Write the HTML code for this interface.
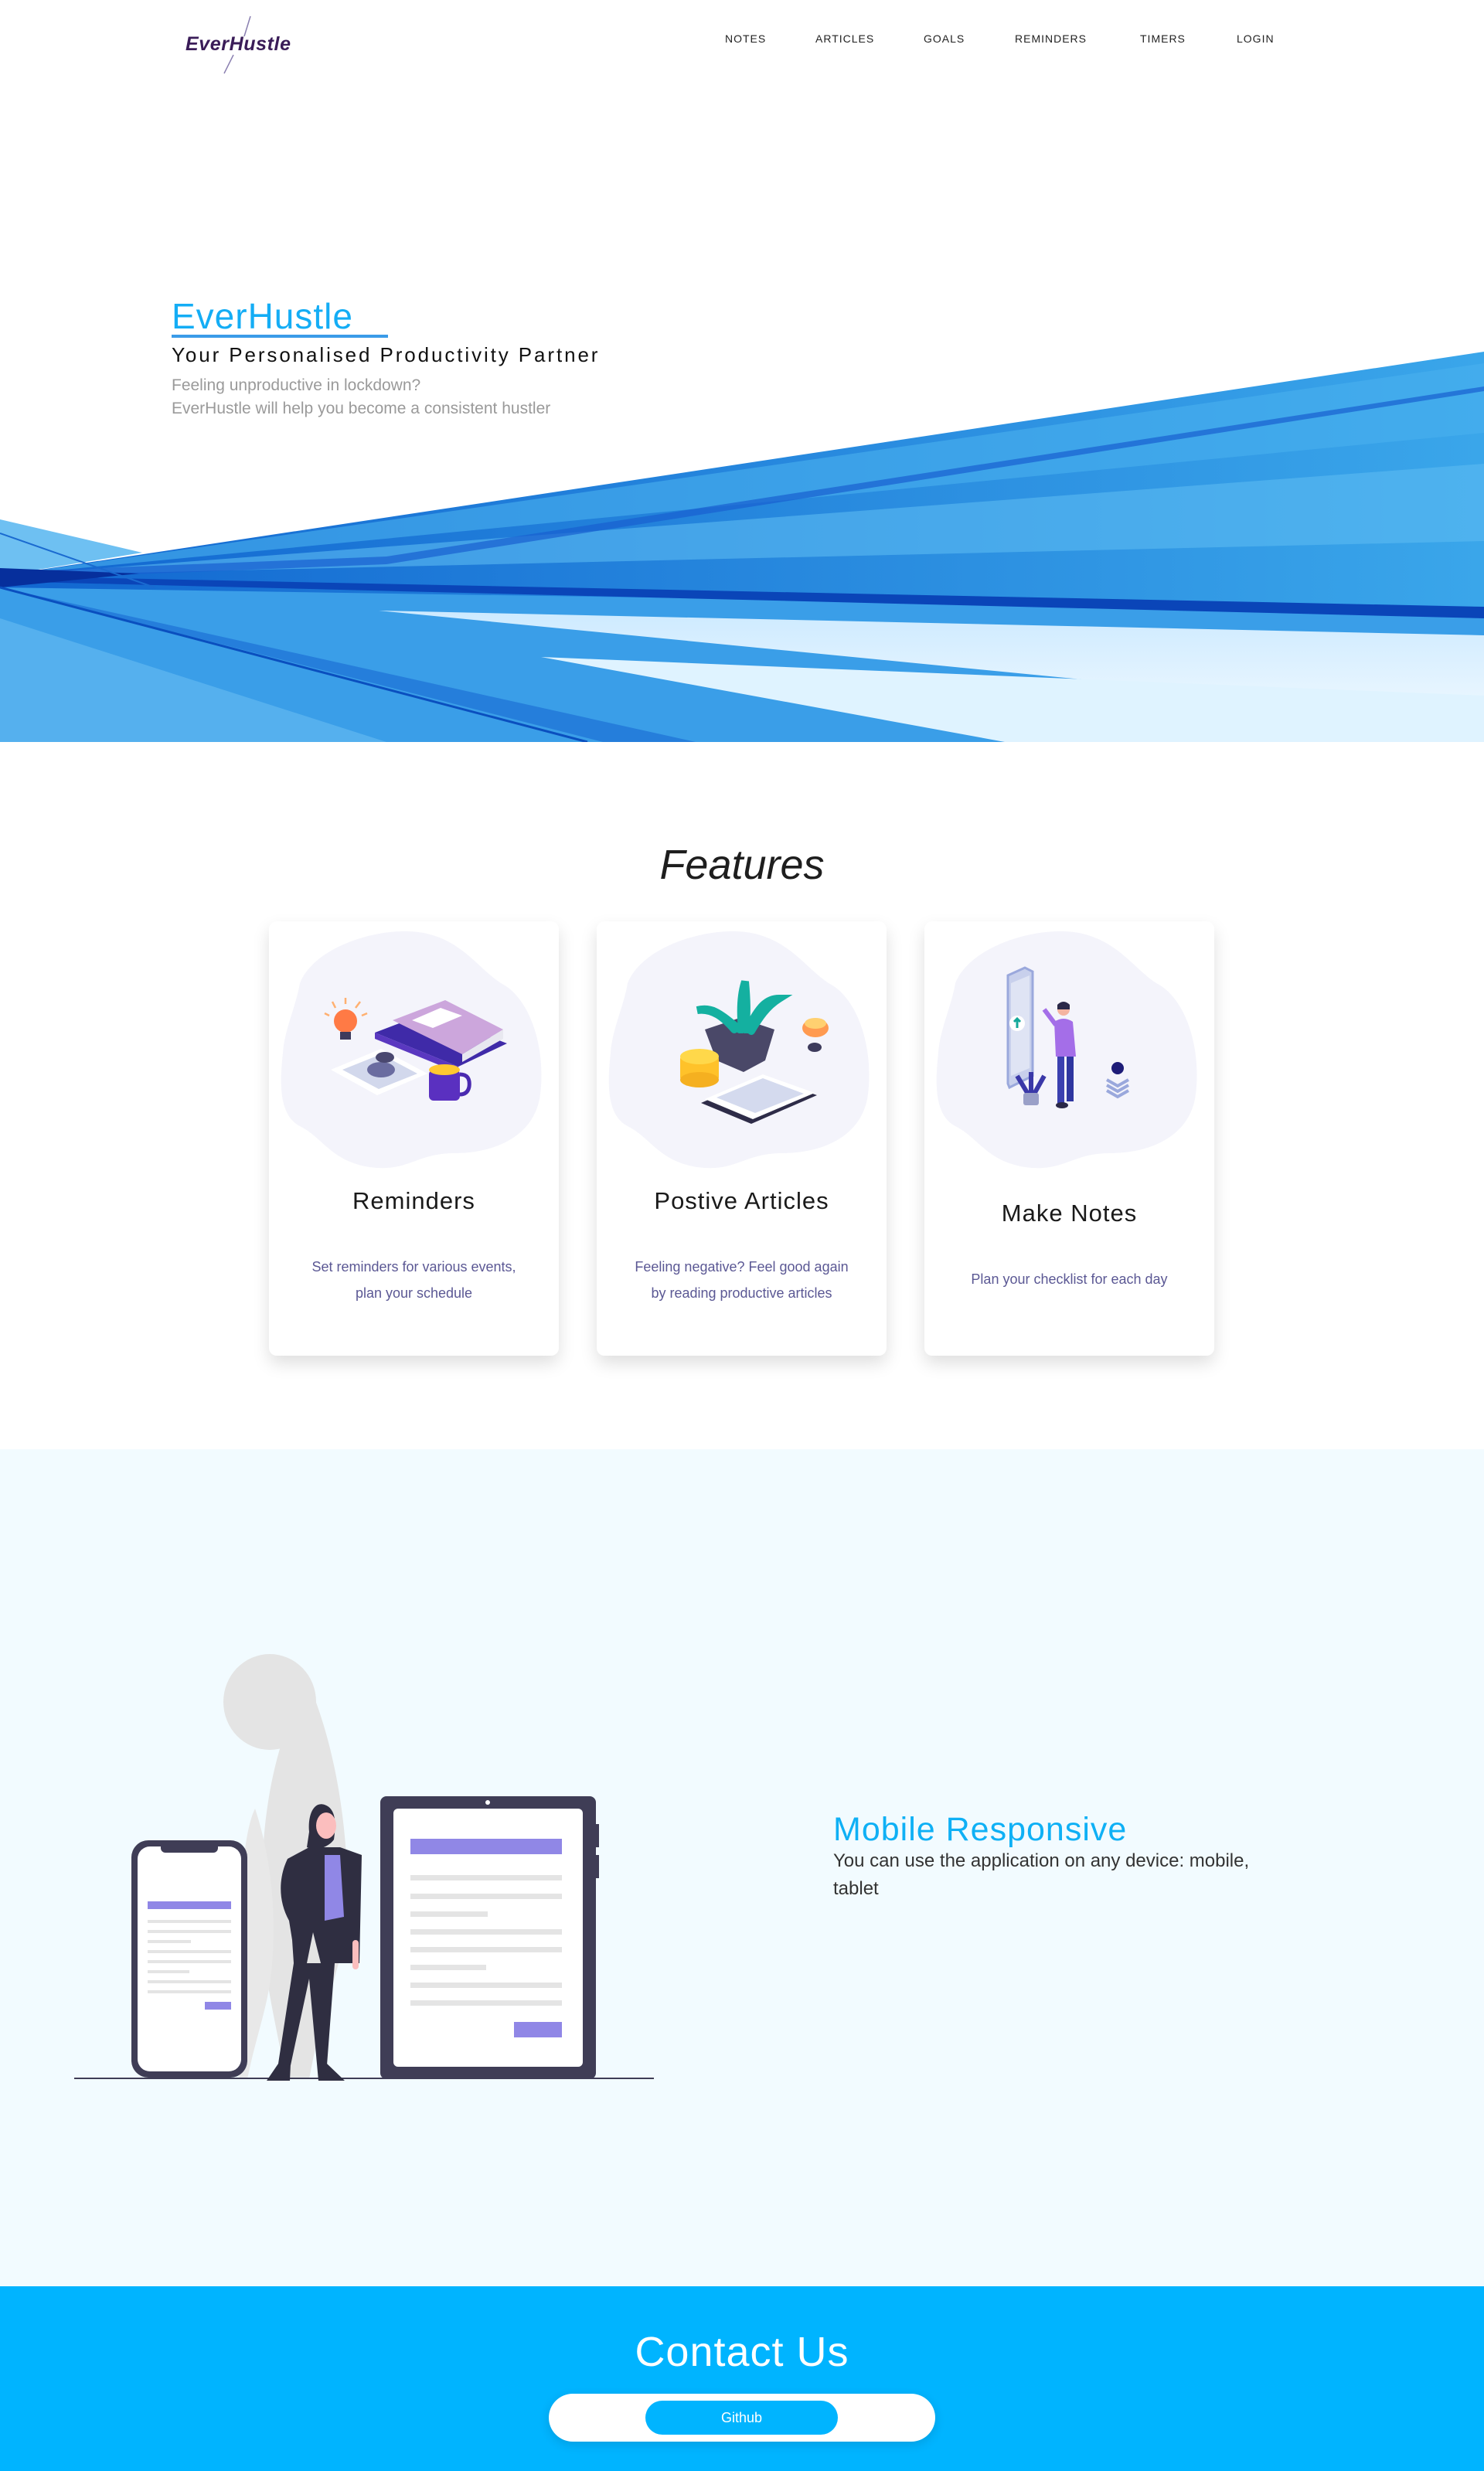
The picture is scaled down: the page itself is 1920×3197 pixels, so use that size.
<!DOCTYPE html>
<html><head><meta charset="utf-8">
<style>
*{margin:0;padding:0;box-sizing:border-box}
html,body{width:1920px;height:3197px;background:#fff;font-family:"Liberation Sans",sans-serif;overflow:hidden}
.abs{position:absolute}
.nav a{position:absolute;top:42px;font-size:14px;letter-spacing:1px;color:#222;text-decoration:none}
.card{position:absolute;top:1192px;width:375px;height:562px;background:#fff;border-radius:10px;box-shadow:0 10px 22px rgba(0,0,0,0.13)}
.card h3{position:absolute;left:0;right:0;text-align:center;font-weight:normal;font-size:31px;letter-spacing:1px;color:#1a1a1a}
.card p{position:absolute;left:25px;right:25px;text-align:center;font-size:18px;line-height:34px;color:#5b5894}
</style></head><body>

<svg class="abs" style="left:230px;top:15px" width="170" height="85">
<line x1="94" y1="6" x2="86" y2="32" stroke="#8a7fb0" stroke-width="1.5"/>
<line x1="72" y1="56" x2="60" y2="80" stroke="#8a7fb0" stroke-width="1.5"/>
<text x="10" y="50" font-family="Liberation Sans" font-style="italic" font-weight="bold" font-size="25" fill="#3a1c58" textLength="136">EverHustle</text>
</svg>
<div class="nav">
<a style="left:938px">NOTES</a>
<a style="left:1055px">ARTICLES</a>
<a style="left:1195px">GOALS</a>
<a style="left:1313px">REMINDERS</a>
<a style="left:1475px">TIMERS</a>
<a style="left:1600px">LOGIN</a>
</div>

<svg class="abs" style="left:0;top:440px" width="1920" height="520" viewBox="0 440 1920 520">
<defs>
<linearGradient id="g1" x1="0" y1="0" x2="1" y2="0">
<stop offset="0" stop-color="#1166d0"/><stop offset="1" stop-color="#3aa6ea"/></linearGradient>
<linearGradient id="g2" x1="0" y1="0" x2="0" y2="1">
<stop offset="0" stop-color="#cdeaff"/><stop offset="1" stop-color="#eef8ff"/></linearGradient>
</defs>
<polygon points="0,672 184,715 0,745" fill="#6ec0f2"/>
<polygon points="0,745 1920,455 1920,960 0,960" fill="url(#g1)"/>
<polygon points="0,745 1920,470 1920,560 " fill="#4ab0ee" opacity="0.6"/>
<polygon points="0,745 1920,600 1920,700" fill="#5cbaf2" opacity="0.6"/>
<polygon points="0,760 1920,790 1920,960 0,960" fill="#3a9ee8"/>
<polygon points="490,790 1920,822 1920,930" fill="url(#g2)"/>
<polygon points="700,850 1920,900 1920,960 1300,960" fill="#dff3ff"/>
<polygon points="0,800 500,960 0,960" fill="#55b0ee"/>
<polygon points="0,760 900,960 780,960" fill="#1d70d6" opacity="0.7"/>
<polygon points="0,745 1920,785 1920,800 0,752" fill="#0a45b8"/>
<polygon points="0,740 500,720 1920,500 1920,506 500,730 0,750" fill="#1860d0" opacity="0.7"/>
<polygon points="0,735 180,742 0,760" fill="#062f9c"/>
<line x1="0" y1="690" x2="200" y2="760" stroke="#1a6ad0" stroke-width="2"/>
<line x1="0" y1="760" x2="760" y2="960" stroke="#0a4fbf" stroke-width="3"/>
</svg>

<div class="abs" style="left:222px;top:382px;font-size:46px;color:#14adf5;letter-spacing:1px">EverHustle</div>
<div class="abs" style="left:222px;top:433px;width:280px;height:4px;background:#3a9be8"></div>
<div class="abs" style="left:222px;top:444px;font-size:26px;color:#111;letter-spacing:2.9px">Your Personalised Productivity Partner</div>
<div class="abs" style="left:222px;top:484px;font-size:21px;color:#9a9a9a;line-height:30px">Feeling unproductive in lockdown?<br>EverHustle will help you become a consistent hustler</div>

<div class="abs" style="left:0;width:1920px;top:1088px;text-align:center;font-size:54px;font-style:italic;color:#1e1e1e">Features</div>

<div class="card" style="left:348px">
<svg class="abs" style="left:0;top:0" width="375" height="340">
<path d="M40,80 C60,30 150,5 200,15 C250,25 270,60 300,80 C340,100 360,170 350,230 C340,280 290,300 240,300 C190,300 180,325 130,318 C80,310 70,280 40,265 C10,250 15,200 18,170 C20,140 35,110 40,80Z" fill="#f4f4fb"/>
<circle cx="99" cy="129" r="15" fill="#ff7a45"/><rect x="92" y="143" width="14" height="10" fill="#3d3b5c"/>
<g stroke="#ffb070" stroke-width="2.5"><line x1="99" y1="107" x2="99" y2="99"/><line x1="86" y1="112" x2="82" y2="104"/><line x1="112" y1="112" x2="118" y2="104"/><line x1="78" y1="122" x2="72" y2="119"/><line x1="120" y1="122" x2="127" y2="119"/></g>
<polygon points="137,144 205,118 308,158 245,188" fill="#3f2aa8"/>
<polygon points="137,144 137,152 245,196 245,188" fill="#5a38c0"/>
<polygon points="160,128 228,102 303,140 250,172" fill="#cca6dc"/>
<polygon points="185,128 222,112 250,122 212,138" fill="#fff"/>
<polygon points="250,172 303,140 303,152 250,182" fill="#e8e8f0"/>
<polygon points="80,192 145,165 205,197 140,225" fill="#fff"/>
<polygon points="95,192 145,172 192,197 142,217" fill="#d2d8ec"/>
<ellipse cx="145" cy="192" rx="18" ry="10" fill="#6a6ca0"/><ellipse cx="150" cy="176" rx="12" ry="7" fill="#4a4870"/>
<rect x="207" y="192" width="40" height="40" rx="6" fill="#5a30c0"/>
<ellipse cx="227" cy="192" rx="20" ry="7" fill="#ffc830"/>
<path d="M247,198 q14,0 12,16 q-2,10 -12,10" fill="none" stroke="#4a2ab0" stroke-width="5"/>
</svg>
<h3 style="top:344px">Reminders</h3>
<p style="top:430px">Set reminders for various events,<br>plan your schedule</p>
</div>

<div class="card" style="left:772px">
<svg class="abs" style="left:0;top:0" width="375" height="340">
<path d="M40,80 C60,30 150,5 200,15 C250,25 270,60 300,80 C340,100 360,170 350,230 C340,280 290,300 240,300 C190,300 180,325 130,318 C80,310 70,280 40,265 C10,250 15,200 18,170 C20,140 35,110 40,80Z" fill="#f4f4fb"/>
<polygon points="140,140 185,125 230,140 218,180 190,195 155,180" fill="#4a4868"/>
<path d="M185,140 C160,120 150,110 130,115 C150,112 165,125 178,140 M188,140 C185,110 188,90 192,78 C194,100 195,120 192,140 M195,140 C210,110 220,100 236,100 C220,110 210,125 200,142" stroke="#14b0a0" stroke-width="10" fill="none" stroke-linecap="round"/>
<ellipse cx="283" cy="138" rx="17" ry="12" fill="#ff9a50"/><ellipse cx="283" cy="132" rx="14" ry="7" fill="#ffd070"/>
<ellipse cx="282" cy="163" rx="9" ry="6" fill="#3d3b5c"/>
<rect x="108" y="175" width="50" height="30" rx="3" fill="#ffc22a"/>
<ellipse cx="133" cy="175" rx="25" ry="10" fill="#ffd84a"/><ellipse cx="133" cy="205" rx="25" ry="10" fill="#f5b020"/>
<polygon points="135,235 215,200 285,225 200,262" fill="#2e2c48"/>
<polygon points="140,230 215,198 282,222 202,256" fill="#fff"/>
<polygon points="155,228 215,203 268,223 205,248" fill="#d4daee"/>
</svg>
<h3 style="top:344px">Postive Articles</h3>
<p style="top:430px">Feeling negative? Feel good again<br>by reading productive articles</p>
</div>

<div class="card" style="left:1196px">
<svg class="abs" style="left:0;top:0" width="375" height="340">
<path d="M40,80 C60,30 150,5 200,15 C250,25 270,60 300,80 C340,100 360,170 350,230 C340,280 290,300 240,300 C190,300 180,325 130,318 C80,310 70,280 40,265 C10,250 15,200 18,170 C20,140 35,110 40,80Z" fill="#f4f4fb"/>
<polygon points="108,70 130,60 140,65 140,200 110,215 108,210" fill="#c8d0ec" stroke="#9aa8dc" stroke-width="3"/>
<polygon points="112,80 136,70 136,190 112,200" fill="#dfe4f4"/>
<circle cx="120" cy="132" r="10" fill="#fff"/><path d="M120,126 l0,12 M116,130 l4,-4 4,4" stroke="#13a89a" stroke-width="3" fill="none"/>
<circle cx="180" cy="114" r="8" fill="#f4b4a0"/><path d="M172,108 q8,-8 16,0 l0,6 -16,0z" fill="#2a2848"/>
<path d="M168,130 q12,-8 24,0 l4,45 -26,0z" fill="#a46ee8"/>
<path d="M170,134 l-15,-20" stroke="#a46ee8" stroke-width="6"/>
<rect x="172" y="175" width="9" height="60" fill="#3a40b0"/><rect x="184" y="175" width="9" height="58" fill="#2e36a0"/>
<ellipse cx="178" cy="238" rx="8" ry="4" fill="#2a2848"/>
<path d="M135,225 l-15,-25 M138,225 l0,-30 M141,225 l14,-25" stroke="#3a38a8" stroke-width="6"/>
<rect x="128" y="222" width="20" height="16" rx="3" fill="#9aa0c8"/>
<circle cx="250" cy="190" r="8" fill="#1e1c78"/>
<path d="M236,205 l14,8 14,-8 M236,212 l14,8 14,-8 M236,219 l14,8 14,-8" stroke="#9aa8dc" stroke-width="4" fill="none"/>
</svg>
<h3 style="top:360px">Make Notes</h3>
<p style="top:446px">Plan your checklist for each day</p>
</div>

<div class="abs" style="left:0;top:1875px;width:1920px;height:1083px;background:#f2fbff"></div>
<svg class="abs" style="left:0;top:2100px" width="900" height="620">
<ellipse cx="349" cy="102" rx="60" ry="62" fill="#e4e4e4"/>
<path d="M400,80 C430,150 450,250 450,360 C450,430 420,480 400,590 L370,590 C350,480 330,420 340,300 C345,200 370,120 400,80Z" fill="#e4e4e4"/>
<path d="M330,240 C350,300 360,380 350,460 C345,500 330,540 320,590 L310,590 C300,520 300,440 310,360 C315,300 320,260 330,240Z" fill="#e8e8e8"/>
<rect x="492" y="224" width="279" height="366" rx="8" fill="#3f3d56"/>
<rect x="509" y="240" width="245" height="334" rx="6" fill="#fff"/>
<circle cx="631" cy="232" r="3" fill="#fff"/>
<rect x="771" y="260" width="4" height="30" fill="#3f3d56"/><rect x="771" y="300" width="4" height="30" fill="#3f3d56"/>
<rect x="531" y="279" width="196" height="20" fill="#9087e6"/>
<g fill="#e4e4e4"><rect x="531" y="326" width="196" height="7"/><rect x="531" y="350" width="196" height="7"/><rect x="531" y="373" width="100" height="7"/><rect x="531" y="396" width="196" height="7"/><rect x="531" y="419" width="196" height="7"/><rect x="531" y="442" width="98" height="7"/><rect x="531" y="465" width="196" height="7"/><rect x="531" y="488" width="196" height="7"/></g>
<rect x="665" y="516" width="62" height="20" fill="#9087e6"/>
<rect x="170" y="281" width="150" height="307" rx="22" fill="#3f3d56"/>
<rect x="178" y="289" width="134" height="291" rx="16" fill="#fff"/>
<rect x="208" y="281" width="74" height="16" rx="6" fill="#3f3d56"/>
<rect x="191" y="360" width="108" height="10" fill="#9087e6"/>
<g fill="#e4e4e4"><rect x="191" y="384" width="108" height="4"/><rect x="191" y="397" width="108" height="4"/><rect x="191" y="410" width="56" height="4"/><rect x="191" y="423" width="108" height="4"/><rect x="191" y="436" width="108" height="4"/><rect x="191" y="449" width="54" height="4"/><rect x="191" y="462" width="108" height="4"/><rect x="191" y="475" width="108" height="4"/></g>
<rect x="265" y="490" width="34" height="10" fill="#9087e6"/>
<line x1="96" y1="589" x2="846" y2="589" stroke="#3f3d56" stroke-width="2"/>
<path d="M420,235 C405,230 398,250 400,270 L397,290 C410,295 425,290 432,280 C435,260 435,240 420,235Z" fill="#2f2e41"/>
<ellipse cx="422" cy="262" rx="13" ry="17" fill="#fbbebe"/>
<path d="M400,290 L372,305 C360,330 360,360 374,385 L378,410 L380,440 L397,440 L405,400 L415,440 L465,440 L468,300 L440,290Z" fill="#2f2e41"/>
<path d="M420,300 L440,300 L445,380 L420,385Z" fill="#9087e6"/>
<path d="M380,440 L360,570 L376,572 L400,460 L410,570 L423,572 L433,440Z" fill="#2f2e41"/>
<path d="M360,570 L345,592 L375,592 L376,570Z M410,570 L412,592 L446,592 L423,570Z" fill="#2f2e41"/>
<rect x="456" y="410" width="8" height="38" rx="4" fill="#fbbebe"/>
</svg>
<div class="abs" style="left:1078px;top:2343px;font-size:43px;color:#0fb0f5;letter-spacing:1px">Mobile Responsive</div>
<div class="abs" style="left:1078px;top:2390px;width:590px;font-size:24px;line-height:36px;color:#333">You can use the application on any device: mobile, tablet</div>

<div class="abs" style="left:0;top:2958px;width:1920px;height:239px;background:#00b4ff"></div>
<div class="abs" style="left:0;width:1920px;top:3012px;text-align:center;font-size:54px;color:#fff;letter-spacing:1px">Contact Us</div>
<div class="abs" style="left:710px;top:3097px;width:500px;height:62px;background:#fff;border-radius:31px;box-shadow:0 4px 14px rgba(0,0,0,0.12)"></div>
<div class="abs" style="left:835px;top:3106px;width:249px;height:44px;background:#00b4ff;border-radius:22px;color:#fff;font-size:18px;text-align:center;line-height:44px">Github</div>
</body></html>
